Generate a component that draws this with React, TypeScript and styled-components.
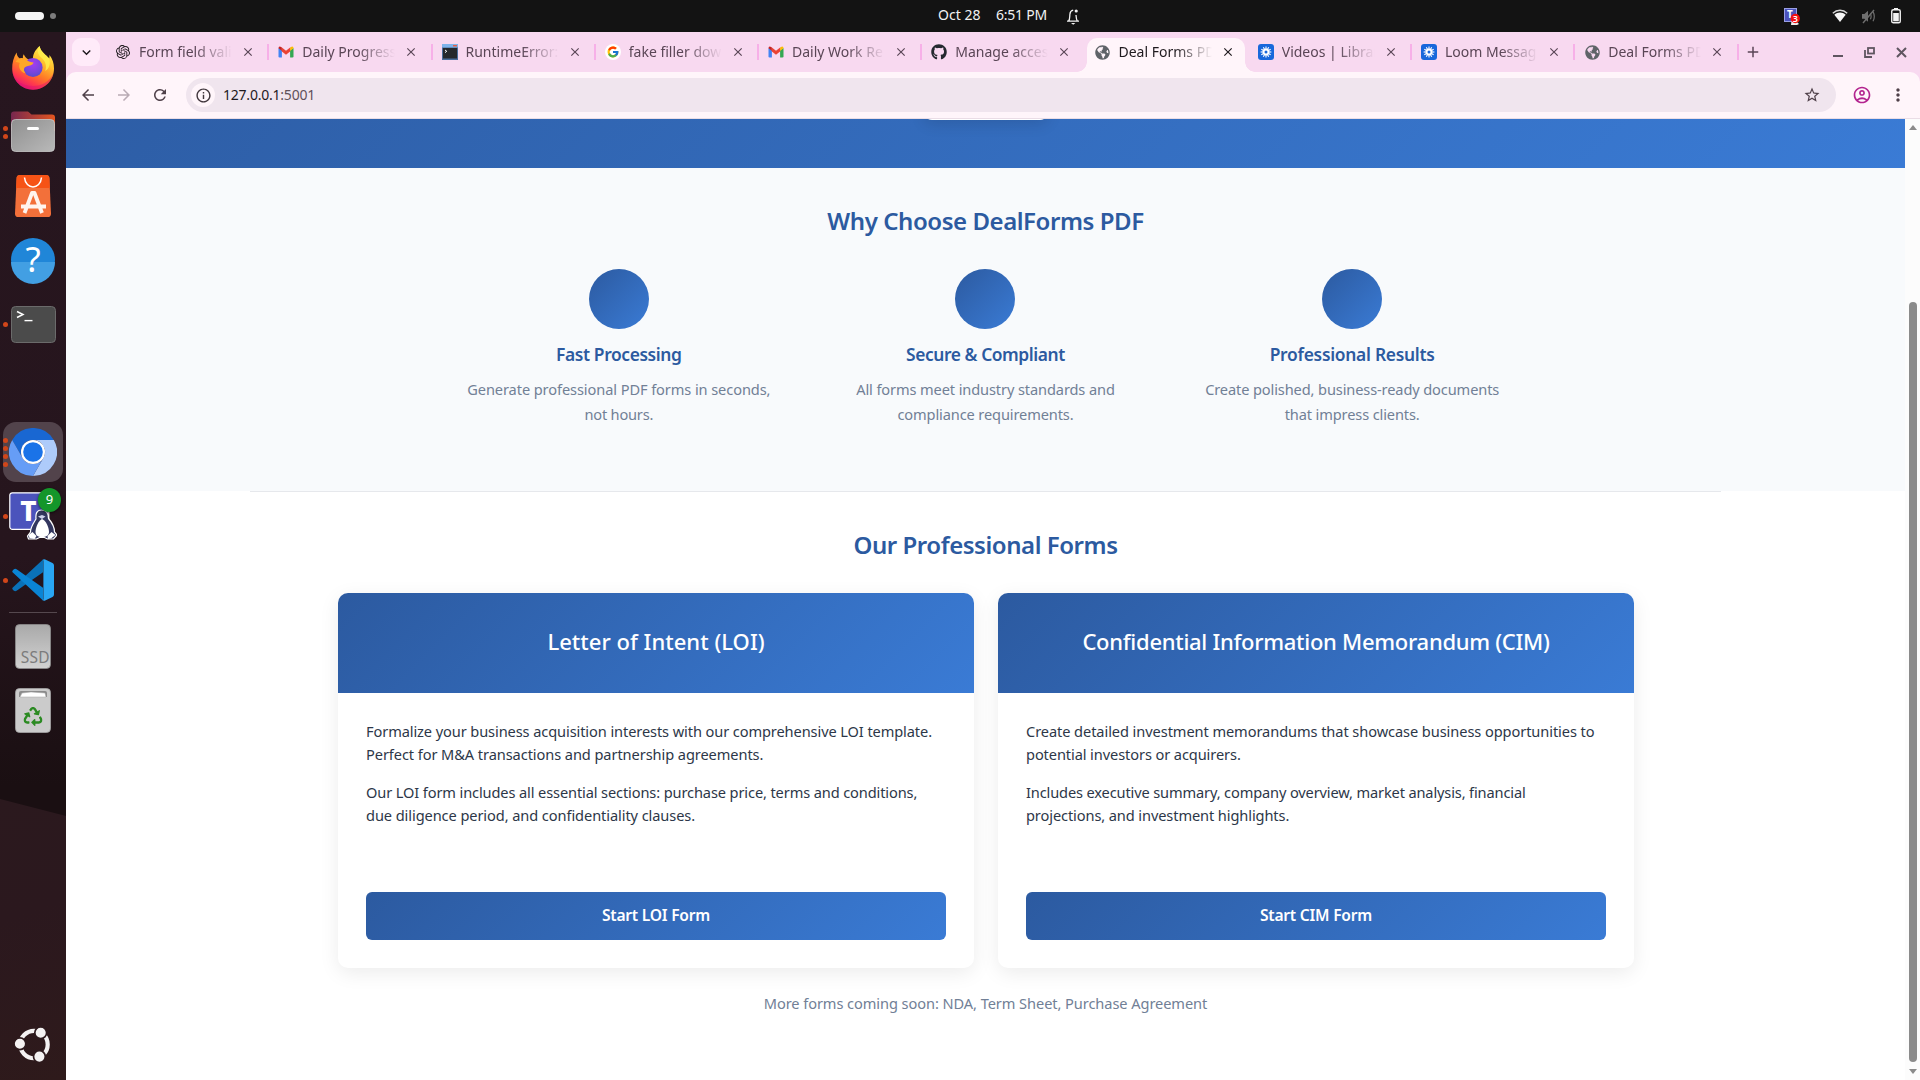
import React from 'react';
import styled, { createGlobalStyle, css } from 'styled-components';
import { SiOpenai } from 'react-icons/si';
import { FcGoogle } from 'react-icons/fc';
import { FaGithub, FaGlobeAmericas, FaRecycle } from 'react-icons/fa';
import {
  MdAdd,
  MdArrowBack,
  MdArrowForward,
  MdClose,
  MdKeyboardArrowDown,
  MdMoreVert,
  MdOutlineAccountCircle,
  MdOutlineInfo,
  MdRefresh,
  MdStarBorder,
} from 'react-icons/md';

const blueGradient = 'linear-gradient(135deg, #2c5aa0 0%, #3a7bd5 100%)';

const GlobalStyle = createGlobalStyle`
  *, *::before, *::after { box-sizing: border-box; }
  body { margin: 0; font-family: "Noto Sans", "Open Sans", sans-serif; overflow: hidden; }
  h2, h3, p { margin: 0; }
  svg { display: block; flex: none; }
`;

const Desktop = styled.div`
  display: grid;
  grid-template-columns: 66px 1fr;
  grid-template-rows: 32px 1fr;
  width: 1920px;
  height: 1080px;
  overflow: hidden;
`;

/* ---------- system bar ---------- */

const SystemBar = styled.header`
  grid-column: 1 / -1;
  display: grid;
  grid-template-columns: 938px auto 1fr;
  align-items: center;
  background: #131313;
  color: #f2f2f2;
`;

const Workspaces = styled.div`
  display: flex;
  align-items: center;
  gap: 6px;
  padding-left: 15px;
`;

const WorkspaceMark = styled.span<{ $current?: boolean }>`
  width: ${p => (p.$current ? 29 : 6)}px;
  height: ${p => (p.$current ? 8 : 6)}px;
  border-radius: 4px;
  background: ${p => (p.$current ? '#f5f5f5' : '#7d7d7d')};
`;

const Clock = styled.div`
  display: flex;
  align-items: center;
  font-size: 14px;
  line-height: 20px;
  white-space: nowrap;
`;

const ClockText = styled.span<{ $width: number; $ls: number }>`
  width: ${p => p.$width}px;
  padding-bottom: 2px;
  letter-spacing: ${p => p.$ls}px;
`;

const Tray = styled.div`
  display: flex;
  align-items: center;
  justify-content: flex-end;
  padding-right: 19px;
`;

const TraySlot = styled.span<{ $gap: number }>`
  margin-left: ${p => p.$gap}px;
`;

/* ---------- dock ---------- */

const Dock = styled.nav`
  position: relative;
  display: flex;
  flex-direction: column;
  padding-top: 4px;
  background: linear-gradient(180deg, #27161f 0%, #26151d 50%, #1a0f12 72%);

  &::before {
    content: '';
    position: absolute;
    inset: 767px 0 0 0;
    clip-path: polygon(0 0, 100% 17px, 100% 100%, 0 100%);
    background: linear-gradient(160deg, #2b191e 0%, #2b181e 40%, #2e1a1b 100%);
  }
`;

const DockItem = styled.div<{ $active?: boolean }>`
  position: relative;
  display: flex;
  align-items: center;
  justify-content: center;
  height: 64px;
  ${p =>
    p.$active &&
    css`
      &::before {
        content: '';
        position: absolute;
        inset: 2px 3px;
        border-radius: 13px;
        background: #52434b;
      }
    `}
  & > svg { position: relative; }
`;

const DockGap = styled.div`
  height: 64px;
`;

const DockRule = styled.hr`
  width: 48px;
  height: 1px;
  margin: 0 auto 1px;
  border: 0;
  background: #55484e;
`;

const RunningDots = styled.div`
  position: absolute;
  left: 3px;
  top: 0;
  bottom: 0;
  display: flex;
  flex-direction: column;
  justify-content: center;
  gap: 3px;
  z-index: 1;
`;

const RunningDot = styled.i`
  width: 5px;
  height: 5px;
  border-radius: 50%;
  background: #d1461a;
`;

const Launcher = styled.div`
  position: relative;
  display: flex;
  justify-content: center;
  margin-top: auto;
  padding-bottom: 17px;
`;

const Badge = styled.span`
  position: absolute;
  left: 38px;
  top: 4px;
  width: 23px;
  height: 24px;
  border-radius: 50%;
  background: #14962a;
  box-shadow: 0 1px 3px rgba(0, 0, 0, 0.6);
  color: #fff;
  font-size: 13px;
  line-height: 23px;
  text-align: center;
`;

/* ---------- browser ---------- */

const Browser = styled.div`
  display: flex;
  flex-direction: column;
  min-width: 0;
  background: #f8d9f0;
`;

const TabStrip = styled.div`
  display: flex;
  align-items: center;
  height: 40px;
  padding-left: 6px;
  color: #5a4656;
`;

const TabSearch = styled.button`
  display: flex;
  align-items: center;
  justify-content: center;
  width: 28px;
  height: 28px;
  margin-right: 6px;
  padding: 0;
  border: 0;
  border-radius: 9px;
  background: #ffebf9;
  color: #1f1a1e;
`;

const Tab = styled.div<{ $active?: boolean; $divided?: boolean }>`
  position: relative;
  display: flex;
  align-items: center;
  flex: none;
  width: 163.25px;
  height: 28px;
  padding-left: 9px;
  color: ${p => (p.$active ? '#1f1a1e' : '#5a4656')};
  ${p =>
    p.$divided &&
    css`
      &::after {
        content: '';
        position: absolute;
        right: 0;
        top: 6px;
        width: 2px;
        height: 16px;
        background: #f7b0e8;
      }
    `}
  & > svg { position: relative; }
`;

const ActiveShape = styled.div`
  position: absolute;
  left: 1px;
  right: 4px;
  top: 0;
  height: 34px;
  border-radius: 10px 10px 0 0;
  background: #fff5fa;

  &::before, &::after {
    content: '';
    position: absolute;
    bottom: 0;
    width: 10px;
    height: 10px;
  }
  &::before {
    left: -10px;
    background: radial-gradient(circle at 0 0, transparent 9.5px, #fff5fa 10px);
  }
  &::after {
    right: -10px;
    background: radial-gradient(circle at 100% 0, transparent 9.5px, #fff5fa 10px);
  }
`;

const TabFavicon = styled.span`
  position: relative;
  display: flex;
  justify-content: center;
  width: 16px;
`;

const TabTitle = styled.span`
  position: relative;
  width: 96px;
  margin-left: 8px;
  padding-bottom: 1px;
  overflow: hidden;
  white-space: nowrap;
  font-size: 14px;
  line-height: 20px;
  mask-image: linear-gradient(90deg, #000 58%, transparent 97%);
`;

const TabClose = styled.span`
  position: relative;
  margin-left: 6px;
`;

const NewTab = styled.span`
  margin-left: 5px;
`;

const WindowControls = styled.div`
  display: flex;
  align-items: center;
  gap: 21px;
  margin-left: auto;
  padding-right: 13px;
`;

const Toolbar = styled.div`
  display: flex;
  align-items: center;
  height: 47px;
  padding: 0 11px 0 13px;
  border-bottom: 1px solid #eadde6;
  border-radius: 10px 10px 0 0;
  background: #fff5fa;
  color: #4f4049;
`;

const NavButton = styled.span<{ $muted?: boolean }>`
  display: flex;
  flex: none;
  width: 36px;
  color: ${p => (p.$muted ? '#b9abb4' : 'inherit')};
`;

const AddressBar = styled.div`
  display: flex;
  align-items: center;
  flex: none;
  width: 1650px;
  height: 34px;
  margin-left: -1px;
  padding: 0 15px 0 5px;
  border-radius: 17px;
  background: #f0e5ee;
`;

const SiteInfo = styled.span`
  display: flex;
  align-items: center;
  justify-content: center;
  width: 24px;
  height: 24px;
  border-radius: 50%;
  background: #fff5fa;
  color: #40363c;
`;

const Url = styled.span`
  flex: 1;
  margin-left: 8px;
  padding-bottom: 1px;
  font-size: 14px;
  line-height: 20px;
  letter-spacing: -0.22px;
  color: #1f1a1e;
`;

const Port = styled.span`
  color: #5f515b;
`;

const Profile = styled.span`
  margin-left: 16px;
  color: #b3248f;
`;

const MenuDots = styled.span`
  margin-left: 16px;
`;

const Viewport = styled.main`
  display: grid;
  grid-template-columns: 1fr 15px;
  flex: 1;
  min-height: 0;
`;

const Scrollbar = styled.div`
  display: flex;
  flex-direction: column;
  align-items: center;
  justify-content: space-between;
  padding: 6px 0 6px;
  background: #fcfcfc;
`;

const ScrollArrow = styled.i<{ $down?: boolean }>`
  border: 4px solid transparent;
  border-width: ${p => (p.$down ? '5px 4px 0' : '0 4px 5px')};
  border-${p => (p.$down ? 'top' : 'bottom')}-color: #8b8b8b;
`;

const ScrollThumb = styled.i`
  width: 8px;
  height: 760px;
  margin: auto 0 7px;
  border-radius: 4px;
  background: #8b8b8b;
`;

/* ---------- page ---------- */

const Page = styled.div`
  background: #fff;
  min-width: 0;
`;

const HeroWindow = styled.div`
  display: flex;
  flex-direction: column;
  justify-content: flex-end;
  height: 49px;
  overflow: hidden;
`;

const Hero = styled.section`
  display: flex;
  flex: none;
  align-items: flex-end;
  justify-content: center;
  height: 263px;
  padding-bottom: 48px;
  background: ${blueGradient};
`;

const HeroAction = styled.div`
  width: 124px;
  height: 48px;
  border-radius: 8px;
  background: #fff;
  box-shadow: 0 4px 15px rgba(0, 0, 0, 0.12);
`;

const Features = styled.section`
  display: flex;
  flex-direction: column;
  align-items: center;
  height: 323px;
  padding-top: 37px;
  background: #f8fafc;
`;

const SectionTitle = styled.h2<{ $ls: number }>`
  color: #2c5aa0;
  font-size: 24px;
  font-weight: 600;
  line-height: 32px;
  letter-spacing: ${p => p.$ls}px;
`;

const FeatureGrid = styled.div`
  display: grid;
  grid-template-columns: repeat(3, 1fr);
  width: 1100px;
  margin-top: 32px;
`;

const Feature = styled.article`
  display: flex;
  flex-direction: column;
  align-items: center;
`;

const FeatureDisc = styled.div`
  width: 60px;
  height: 60px;
  border-radius: 50%;
  background: ${blueGradient};
`;

const FeatureTitle = styled.h3<{ $ls: number }>`
  margin: 13px 0 11px;
  color: #2c5aa0;
  font-size: 17.4px;
  font-weight: 600;
  line-height: 24px;
  letter-spacing: ${p => p.$ls}px;
`;

const MutedText = styled.p`
  color: #718096;
  font-size: 14.6px;
  line-height: 25px;
  text-align: center;
`;

const Line = styled.span<{ $ls: number }>`
  display: block;
  white-space: nowrap;
  letter-spacing: ${p => p.$ls}px;
`;

const Forms = styled.section`
  display: flex;
  flex-direction: column;
  align-items: center;
`;

const Divider = styled.div`
  width: 80%;
  height: 1px;
  margin-bottom: 37px;
  background: #e6e8ec;
`;

const CardGrid = styled.div`
  display: grid;
  grid-template-columns: repeat(2, 636px);
  gap: 24px;
  margin: 32px 0 23px 1px;
`;

const Card = styled.article`
  display: flex;
  flex-direction: column;
  height: 375px;
  border-radius: 10px;
  overflow: hidden;
  background: #fff;
  box-shadow: 0 5px 20px rgba(0, 0, 0, 0.08);
`;

const CardHeader = styled.div`
  display: flex;
  align-items: center;
  justify-content: center;
  height: 100px;
  padding-bottom: 5px;
  background: ${blueGradient};
`;

const CardTitle = styled.h3<{ $ls: number }>`
  color: #fff;
  font-size: 22px;
  font-weight: 500;
  line-height: 30px;
  letter-spacing: ${p => p.$ls}px;
`;

const CardBody = styled.div`
  display: flex;
  flex: 1;
  flex-direction: column;
  gap: 15px;
  padding: 27px 28px 28px;
`;

const CardText = styled.p`
  color: #2d3748;
  font-size: 14.6px;
  line-height: 23px;
`;

const StartButton = styled.button`
  height: 48px;
  margin-top: auto;
  padding: 0 0 2px;
  border: 0;
  border-radius: 6px;
  background: ${blueGradient};
  color: #fff;
  font: 600 15.6px 'Noto Sans', sans-serif;
  letter-spacing: -0.22px;
`;

/* ---------- drawings ---------- */

const BellIcon = () => (
  <svg width="14" height="17" viewBox="0 0 14 17" fill="none" stroke="#f2f2f2" strokeWidth="1.3">
    <path d="M1 13.2h12M2.6 13C4 11.4 3.6 9 3.9 6.2 4.1 4 5.2 2.6 7.2 2.2M11.3 13c-1-1.2-1.1-3.4-1.3-6" />
    <circle cx="10.2" cy="3" r="1.6" fill="#f2f2f2" stroke="none" />
    <path d="M5 15h4.4L7.2 16.8z" fill="#f2f2f2" stroke="none" />
  </svg>
);

const TeamsTrayIcon = () => (
  <svg width="16" height="17" viewBox="0 0 16 17">
    <rect x=".5" y=".5" width="12" height="13" fill="#4b53bc" stroke="#9aa0e4" />
    <path d="M8 9l7 7-2 1H7z" fill="#eee" />
    <text x="3" y="10" fontSize="10" fontWeight="700" fill="#fff">T</text>
    <circle cx="11.3" cy="10.5" r="4.7" fill="#f40d0d" />
    <text x="11.3" y="13.8" fontSize="9" fontWeight="600" textAnchor="middle" fill="#fff">3</text>
  </svg>
);

const WifiIcon = () => (
  <svg width="16" height="14" viewBox="0 0 16 14">
    <path d="M.8 4.2C5 .2 11 .2 15.2 4.2" fill="none" stroke="#d8d8d8" strokeWidth="1.4" />
    <path d="M2.3 5.8C5.7 2.6 10.3 2.6 13.7 5.8L8 13z" fill="#f5f5f5" />
  </svg>
);

const MutedIcon = () => (
  <svg width="15" height="15" viewBox="0 0 15 15" fill="none" stroke="#6e6e6e">
    <path d="M1 5h2.4L7 1.8v11L3.4 9.8H1z" fill="#6e6e6e" stroke="none" />
    <path d="M9.4 4.6q1.4 2.8 0 5.6M12 2.6q2.6 4.8 0 9.6" strokeWidth="1.2" />
    <path d="M2 14L13 1" strokeWidth="1.4" />
  </svg>
);

const BatteryIcon = () => (
  <svg width="10" height="16" viewBox="0 0 10 16">
    <rect x="3" y="0" width="4" height="2" fill="#f2f2f2" />
    <rect x=".75" y="1.75" width="8.5" height="13" rx="1.6" fill="none" stroke="#f2f2f2" strokeWidth="1.4" />
    <rect x="2.2" y="5" width="5.6" height="8.3" fill="#f2f2f2" />
  </svg>
);

const FirefoxIcon = () => (
  <svg width="44" height="46" viewBox="-1 -1 44 46">
    <defs>
      <linearGradient id="ffBody" x1=".8" y1=".05" x2=".3" y2="1">
        <stop offset="0" stopColor="#fff14f" />
        <stop offset=".3" stopColor="#ffc02e" />
        <stop offset=".58" stopColor="#ff7a26" />
        <stop offset=".8" stopColor="#ff3a4c" />
        <stop offset="1" stopColor="#e3107c" />
      </linearGradient>
      <radialGradient id="ffGlobe" cx=".5" cy=".3" r=".8">
        <stop offset="0" stopColor="#a63cf0" />
        <stop offset=".6" stopColor="#7446dd" />
        <stop offset="1" stopColor="#4a4fc4" />
      </radialGradient>
    </defs>
    <path
      fill="url(#ffBody)"
      d="M4.6 6.5C1.6 11 0 17 .2 23 .5 35 10 43.7 21 43.7c12 0 21-9.7 21-21.2 0-5.500-1.500-9.500-4.500-13.500l-.2 3.600C34 8.500 28.500 6 27.600 0c-4.600 4-7.100 9-6.600 13.500l-4 .2c-2.500-1.200-4.300-3-5.200-5.400-.9 1.200-1.100 2.600-.8 4.200l-3.200.2C5.800 11 4.700 9 4.600 6.500z"
    />
    <path d="M27.600 0c-2.500 4-2.400 8 1.600 11.500 4 3.500 6 8 4 13.500 4-2 5.500-7 4.100-12.400C34 8.500 28.500 6 27.600 0z" fill="#fff04d" opacity=".8" />
    <circle cx="21" cy="21.500" r="9.600" fill="url(#ffGlobe)" />
    <path d="M3.500 16c2-3.500 5.500-5 9-3.500 1.500.7 3.500 3.500 9 4-.8 2.800-4 3.200-6.500 3.800-3.500.900-3.800 4-1.600 7-5-1.400-7.600-6-5.600-10.300-1.600-.8-3-.9-4.300-1z" fill="#ffa726" />
    <path d="M.4 25C3 36 12 40 21 40s17-4.500 20.500-13C39.500 37 31 43.700 21 43.700 10.500 43.700 1.500 36 .4 25z" fill="#e0126f" opacity=".45" />
  </svg>
);

const FilesIcon = () => (
  <svg width="44" height="42" viewBox="0 0 44 42">
    <defs>
      <linearGradient id="fileBack" x1="0" x2="1">
        <stop offset="0" stopColor="#77274f" />
        <stop offset="1" stopColor="#e4551f" />
      </linearGradient>
      <linearGradient id="fileFront" x1="0" y1="0" x2="1" y2="1">
        <stop offset="0" stopColor="#8f8f8f" />
        <stop offset="1" stopColor="#b9b9b9" />
      </linearGradient>
    </defs>
    <path d="M0 3.500Q0 .5 3 .5h14l3.500 3H41q3 0 3 3V20H0z" fill="url(#fileBack)" />
    <rect x=".5" y="8.500" width="43" height="32" rx="4" fill="url(#fileFront)" stroke="#c9c9c9" strokeWidth=".8" />
    <rect x="16" y="16" width="12" height="3" rx="1.500" fill="#fff" />
  </svg>
);

const AppCenterIcon = () => (
  <svg width="36" height="42" viewBox="0 0 36 42">
    <path d="M1.600 3Q1.800 0 5 0h26q3.200 0 3.400 3L36 38.500q.1 3.500-3.300 3.500H3.300Q-.1 42 0 38.500z" fill="#f3703a" />
    <path d="M1.600 3Q1.800 0 5 0h26q3.200 0 3.400 3l.4 10H1.100z" fill="#f65316" />
    <path d="M9.500 2.500c1 12.500 16 12.500 17 0" fill="none" stroke="#fff" strokeWidth="1.500" />
    <path d="M9.500 38L17 18h2.500l7.500 20M6 31.500h25" fill="none" stroke="#fff4ee" strokeWidth="3.800" strokeLinejoin="round" />
  </svg>
);

const HelpIcon = () => (
  <svg width="44" height="44" viewBox="0 0 44 44" overflow="visible">
    <circle cx="22" cy="22" r="22" fill="#2086d8" />
    <path d="M0 24h44A22 22 0 0 1 0 24z" fill="#429fe3" />
    <text x="22" y="34" fontSize="35" fontWeight="400" textAnchor="middle" fill="#fff">?</text>
  </svg>
);

const TerminalIcon = () => (
  <svg width="45" height="37" viewBox="0 0 45 37">
    <rect x=".5" y=".5" width="44" height="36" rx="4" fill="#4b4b4b" stroke="#6b6b6b" />
    <path d="M6 5.500l6 3-6 3" fill="none" stroke="#fff" strokeWidth="1.500" />
    <path d="M13.500 14.600h8" stroke="#fff" strokeWidth="1.400" />
  </svg>
);

const ChromiumIcon = () => (
  <svg width="48" height="48" viewBox="0 0 48 48">
    <path d="M24 12h20.800A24 24 0 0 0 3.200 12l10.400 18A12 12 0 0 1 24 12z" fill="#1967d2" />
    <path d="M44.800 12H24a12 12 0 0 1 10.400 18L24 48a24 24 0 0 0 20.800-36z" fill="#aecbfa" />
    <path d="M3.200 12l10.400 18a12 12 0 0 0 20.800 0L24 48A24 24 0 0 1 3.200 12z" fill="#669df6" />
    <circle cx="24" cy="24" r="12" fill="#fff" />
    <circle cx="24" cy="24" r="9.800" fill="#1a73e8" />
  </svg>
);

const TeamsIcon = () => (
  <svg width="48" height="48" viewBox="0 0 48 48">
    <rect x=".8" y=".8" width="39" height="36.500" rx="2.500" fill="#4b53bc" stroke="#fff" strokeWidth="1.200" />
    <text x="19.500" y="29" fontSize="28" fontWeight="800" textAnchor="middle" fill="#fff">T</text>
    <path
      d="M32.500 18c-5 0-6 4-5.500 9-2.500 4-5.500 8-5.500 13l-3 4 1 3h8l3-1.500h5l3 1.500h6l3.500-4-2.500-3c0-5-3-10-6-13.500 0-5-2-8.500-7-8.500z"
      fill="#33375f"
      stroke="#fff"
      strokeWidth="1.200"
    />
    <path d="M33 27c-3 1-6.500 8-6.500 13 0 3 2 5 6.500 5s7-2 7-5c0-5-3.500-12-7-13z" fill="#fff" />
    <path d="M19.500 43l4-3 4 4-2 3-5-1zM38.500 44l4-4 4 3-4.500 3.500-3 .5z" fill="#fff" />
    <path d="M29 24.500l4-1.500 3.500 1.500-3.500 2.500z" fill="#cfd2ea" />
  </svg>
);

const CodeIcon = () => (
  <svg width="42" height="42" viewBox="0 0 42 42">
    <path d="M.8 28.600L31 .6v12.600L4.600 31.800q-1.600 1-3 -.4l-.9-1q-.9-.9.1-1.800z" fill="#0a71b8" />
    <path d="M.8 13.400L31 41.400V28.800L4.600 10.200q-1.600-1-3 .4l-.9 1q-.9.900.1 1.800z" fill="#0a84d4" />
    <path d="M30.500 1q1.200-1.200 2.700-.5L40.500 4Q42 4.800 42 6.400v29.200q0 1.600-1.500 2.400l-7.300 3.500q-1.500.7-2.700-.5.9.2.9-1V2q0-1.200-.9-1z" fill="#29a6f3" />
  </svg>
);

const DriveIcon = () => (
  <svg width="36" height="45" viewBox="0 0 36 45">
    <defs>
      <linearGradient id="drive" x1="0" y1="0" x2="0" y2="1">
        <stop offset="0" stopColor="#a9a9a9" />
        <stop offset="1" stopColor="#d2d2d2" />
      </linearGradient>
    </defs>
    <rect x=".5" y=".5" width="35" height="44" rx="4" fill="url(#drive)" stroke="#8d8d8d" strokeWidth=".8" />
    <text x="20.300" y="39" fontSize="15.500" textAnchor="middle" fill="#7c7c7c" letterSpacing=".2">SSD</text>
  </svg>
);

const TrashIcon = () => (
  <svg width="36" height="45" viewBox="0 0 36 45">
    <rect x=".5" y=".5" width="35" height="44" rx="4" fill="#cbcbcb" stroke="#a5a5a5" strokeWidth=".8" />
    <path d="M4 9V5q0-2 2-2h24q2 0 2 2v4z" fill="#8b8b8b" />
    <path d="M5 9l2-4 9-1 14 1 1 4z" fill="#fff" stroke="#a5a5a5" strokeWidth=".5" />
    <FaRecycle x="8.500" y="19" size={19} color="#2b8a22" />
  </svg>
);

const UbuntuIcon = () => (
  <svg width="40" height="38" viewBox="13 1025 40 38">
    <circle cx="34" cy="1044.500" r="13.700" fill="none" stroke="#f4f2f2" strokeWidth="4.200" />
    {[
      [19.9, 1043.8],
      [40.7, 1032.8],
      [39.4, 1056.6],
    ].map(([x, y]) => (
      <circle key={y} cx={x} cy={y} r="5.900" fill="#f4f2f2" stroke="#2d1a1d" strokeWidth="1.700" />
    ))}
  </svg>
);

const GmailIcon = () => (
  <svg width="16" height="16" viewBox="0 0 16 16">
    <path d="M.5 4v8.300q0 1.200 1.100 1.200h2.300V6.300z" fill="#4285f4" />
    <path d="M15.500 4v8.300q0 1.200-1.100 1.200h-2.300V6.300z" fill="#34a853" />
    <path d="M15.500 4.200L12.100 7V3.600l.8-.7q2.600-1.200 2.600 1.300z" fill="#fbbc04" />
    <path d="M.5 4.200L3.900 7V3.600l-.8-.7Q.5 1.700.5 4.200z" fill="#c5221f" />
    <path d="M3.900 3.500L8 6.700l4.100-3.200v4L8 10.700 3.900 7.500z" fill="#ea4335" />
  </svg>
);

const ConsoleIcon = () => (
  <svg width="16" height="16" viewBox="0 0 16 16">
    <rect width="16" height="16" fill="#4a6d9b" />
    <rect x="0" y="0" width="16" height="3.500" fill="#7fb4ea" />
    <rect x="11" y="1" width="4" height="1.500" fill="#e0604c" />
    <rect x="1" y="4" width="14" height="10.500" fill="#26292c" />
    <path d="M3 6l1.800 1.300L3 8.600" fill="none" stroke="#fff" />
  </svg>
);

const LoomIcon = () => (
  <svg width="16" height="16" viewBox="0 0 16 16">
    <rect width="16" height="16" rx="3" fill="#1868db" />
    <g stroke="#fff" strokeWidth="1.1">
      {[0, 30, 60, 90, 120, 150].map(a => (
        <path key={a} d="M8 2.600v10.800" transform={`rotate(${a} 8 8)`} />
      ))}
    </g>
    <circle cx="8" cy="8" r="3.400" fill="#fff" />
    <circle cx="8" cy="8" r="1.500" fill="#1868db" />
  </svg>
);

const GoogleIcon = () => (
  <svg width="16" height="16" viewBox="0 0 16 16">
    <circle cx="8" cy="8" r="8" fill="#fff" />
    <FcGoogle x="1.500" y="1.500" size={13} />
  </svg>
);

const MinimizeIcon = () => (
  <svg width="10" height="10" viewBox="0 0 10 10">
    <path d="M0 9h10" stroke="#5f5560" strokeWidth="2" />
  </svg>
);

const RestoreIcon = () => (
  <svg width="11" height="11" viewBox="0 0 11 11" fill="none" stroke="#5f5560" strokeWidth="1.800">
    <rect x="4" y="1" width="6" height="5.500" />
    <path d="M1 3v7h7" />
  </svg>
);

const CloseWindowIcon = () => (
  <svg width="11" height="11" viewBox="0 0 11 11">
    <path d="M1 1l9 9M10 1l-9 9" stroke="#5f5560" strokeWidth="2" />
  </svg>
);

/* ---------- content ---------- */

type TextLine = [text: string, letterSpacing: number];

const tabs: { title: string; icon: React.ReactNode }[] = [
  { title: 'Form field vali', icon: <SiOpenai size={14} color="#1f1a1e" /> },
  { title: 'Daily Progress', icon: <GmailIcon /> },
  { title: 'RuntimeError:', icon: <ConsoleIcon /> },
  { title: 'fake filler dow', icon: <GoogleIcon /> },
  { title: 'Daily Work Re', icon: <GmailIcon /> },
  { title: 'Manage acces', icon: <FaGithub size={16} color="#24292f" /> },
  { title: 'Deal Forms PD', icon: <FaGlobeAmericas size={15} color="#5f6368" /> },
  { title: 'Videos | Librar', icon: <LoomIcon /> },
  { title: 'Loom Messag', icon: <LoomIcon /> },
  { title: 'Deal Forms PD', icon: <FaGlobeAmericas size={15} color="#5f6368" /> },
];
const activeTab = 6;

const features: { title: TextLine; lines: TextLine[] }[] = [
  {
    title: ['Fast Processing', -0.39],
    lines: [['Generate professional PDF forms in seconds,', -0.092], ['not hours.', -0.2]],
  },
  {
    title: ['Secure & Compliant', -0.43],
    lines: [['All forms meet industry standards and', -0.112], ['compliance requirements.', -0.124]],
  },
  {
    title: ['Professional Results', -0.27],
    lines: [['Create polished, business-ready documents', -0.121], ['that impress clients.', -0.125]],
  },
];

const forms: { title: TextLine; action: string; paragraphs: TextLine[][] }[] = [
  {
    title: ['Letter of Intent (LOI)', 0.03],
    action: 'Start LOI Form',
    paragraphs: [
      [
        ['Formalize your business acquisition interests with our comprehensive LOI template.', -0.099],
        ['Perfect for M&A transactions and partnership agreements.', -0.081],
      ],
      [
        ['Our LOI form includes all essential sections: purchase price, terms and conditions,', -0.119],
        ['due diligence period, and confidentiality clauses.', -0.083],
      ],
    ],
  },
  {
    title: ['Confidential Information Memorandum (CIM)', -0.28],
    action: 'Start CIM Form',
    paragraphs: [
      [
        ['Create detailed investment memorandums that showcase business opportunities to', -0.078],
        ['potential investors or acquirers.', -0.098],
      ],
      [
        ['Includes executive summary, company overview, market analysis, financial', -0.137],
        ['projections, and investment highlights.', -0.103],
      ],
    ],
  },
];

const Lines = ({ lines }: { lines: TextLine[] }) => (
  <>
    {lines.map(([text, ls]) => (
      <Line key={text} $ls={ls}>{text}</Line>
    ))}
  </>
);

const Running = ({ count }: { count: number }) => (
  <RunningDots>
    {Array.from({ length: count }, (_, i) => (
      <RunningDot key={i} />
    ))}
  </RunningDots>
);

export default function App() {
  return (
    <Desktop>
      <GlobalStyle />
      <SystemBar>
        <Workspaces>
          <WorkspaceMark $current />
          <WorkspaceMark />
        </Workspaces>
        <Clock>
          <ClockText $width={58} $ls={0.02}>Oct 28</ClockText>
          <ClockText $width={70} $ls={-0.23}>6:51 PM</ClockText>
          <BellIcon />
        </Clock>
        <Tray>
          <TraySlot $gap={0}><TeamsTrayIcon /></TraySlot>
          <TraySlot $gap={32}><WifiIcon /></TraySlot>
          <TraySlot $gap={13}><MutedIcon /></TraySlot>
          <TraySlot $gap={15}><BatteryIcon /></TraySlot>
        </Tray>
      </SystemBar>

      <Dock>
        <DockItem><FirefoxIcon /></DockItem>
        <DockItem><Running count={2} /><FilesIcon /></DockItem>
        <DockItem><AppCenterIcon /></DockItem>
        <DockItem><HelpIcon /></DockItem>
        <DockItem><Running count={1} /><TerminalIcon /></DockItem>
        <DockGap />
        <DockItem $active><Running count={4} /><ChromiumIcon /></DockItem>
        <DockItem><Running count={1} /><TeamsIcon /><Badge>9</Badge></DockItem>
        <DockItem><Running count={1} /><CodeIcon /></DockItem>
        <DockRule />
        <DockItem><DriveIcon /></DockItem>
        <DockItem><TrashIcon /></DockItem>
        <Launcher><UbuntuIcon /></Launcher>
      </Dock>

      <Browser>
        <TabStrip>
          <TabSearch><MdKeyboardArrowDown size={17} /></TabSearch>
          {tabs.map((tab, i) => (
            <Tab key={i} $active={i === activeTab} $divided={i !== activeTab && i !== activeTab - 1}>
              {i === activeTab && <ActiveShape />}
              <TabFavicon>{tab.icon}</TabFavicon>
              <TabTitle>{tab.title}</TabTitle>
              <TabClose><MdClose size={14} /></TabClose>
            </Tab>
          ))}
          <NewTab><MdAdd size={18} /></NewTab>
          <WindowControls>
            <MinimizeIcon />
            <RestoreIcon />
            <CloseWindowIcon />
          </WindowControls>
        </TabStrip>
        <Toolbar>
          <NavButton><MdArrowBack size={18} /></NavButton>
          <NavButton $muted><MdArrowForward size={18} /></NavButton>
          <NavButton><MdRefresh size={18} /></NavButton>
          <AddressBar>
            <SiteInfo><MdOutlineInfo size={17} /></SiteInfo>
            <Url>127.0.0.1<Port>:5001</Port></Url>
            <MdStarBorder size={18} />
          </AddressBar>
          <Profile><MdOutlineAccountCircle size={20} /></Profile>
          <MenuDots><MdMoreVert size={20} /></MenuDots>
        </Toolbar>
        <Viewport>
          <Page>
            <HeroWindow>
              <Hero><HeroAction /></Hero>
            </HeroWindow>
            <Features>
              <SectionTitle $ls={-0.44}>Why Choose DealForms PDF</SectionTitle>
              <FeatureGrid>
                {features.map(f => (
                  <Feature key={f.title[0]}>
                    <FeatureDisc />
                    <FeatureTitle $ls={f.title[1]}>{f.title[0]}</FeatureTitle>
                    <MutedText as="div"><Lines lines={f.lines} /></MutedText>
                  </Feature>
                ))}
              </FeatureGrid>
            </Features>
            <Forms>
              <Divider />
              <SectionTitle $ls={-0.45}>Our Professional Forms</SectionTitle>
              <CardGrid>
                {forms.map(form => (
                  <Card key={form.action}>
                    <CardHeader>
                      <CardTitle $ls={form.title[1]}>{form.title[0]}</CardTitle>
                    </CardHeader>
                    <CardBody>
                      {form.paragraphs.map(lines => (
                        <CardText key={lines[0][0]}><Lines lines={lines} /></CardText>
                      ))}
                      <StartButton>{form.action}</StartButton>
                    </CardBody>
                  </Card>
                ))}
              </CardGrid>
              <MutedText>
                <Line $ls={-0.072}>More forms coming soon: NDA, Term Sheet, Purchase Agreement</Line>
              </MutedText>
            </Forms>
          </Page>
          <Scrollbar>
            <ScrollArrow />
            <ScrollThumb />
            <ScrollArrow $down />
          </Scrollbar>
        </Viewport>
      </Browser>
    </Desktop>
  );
}
